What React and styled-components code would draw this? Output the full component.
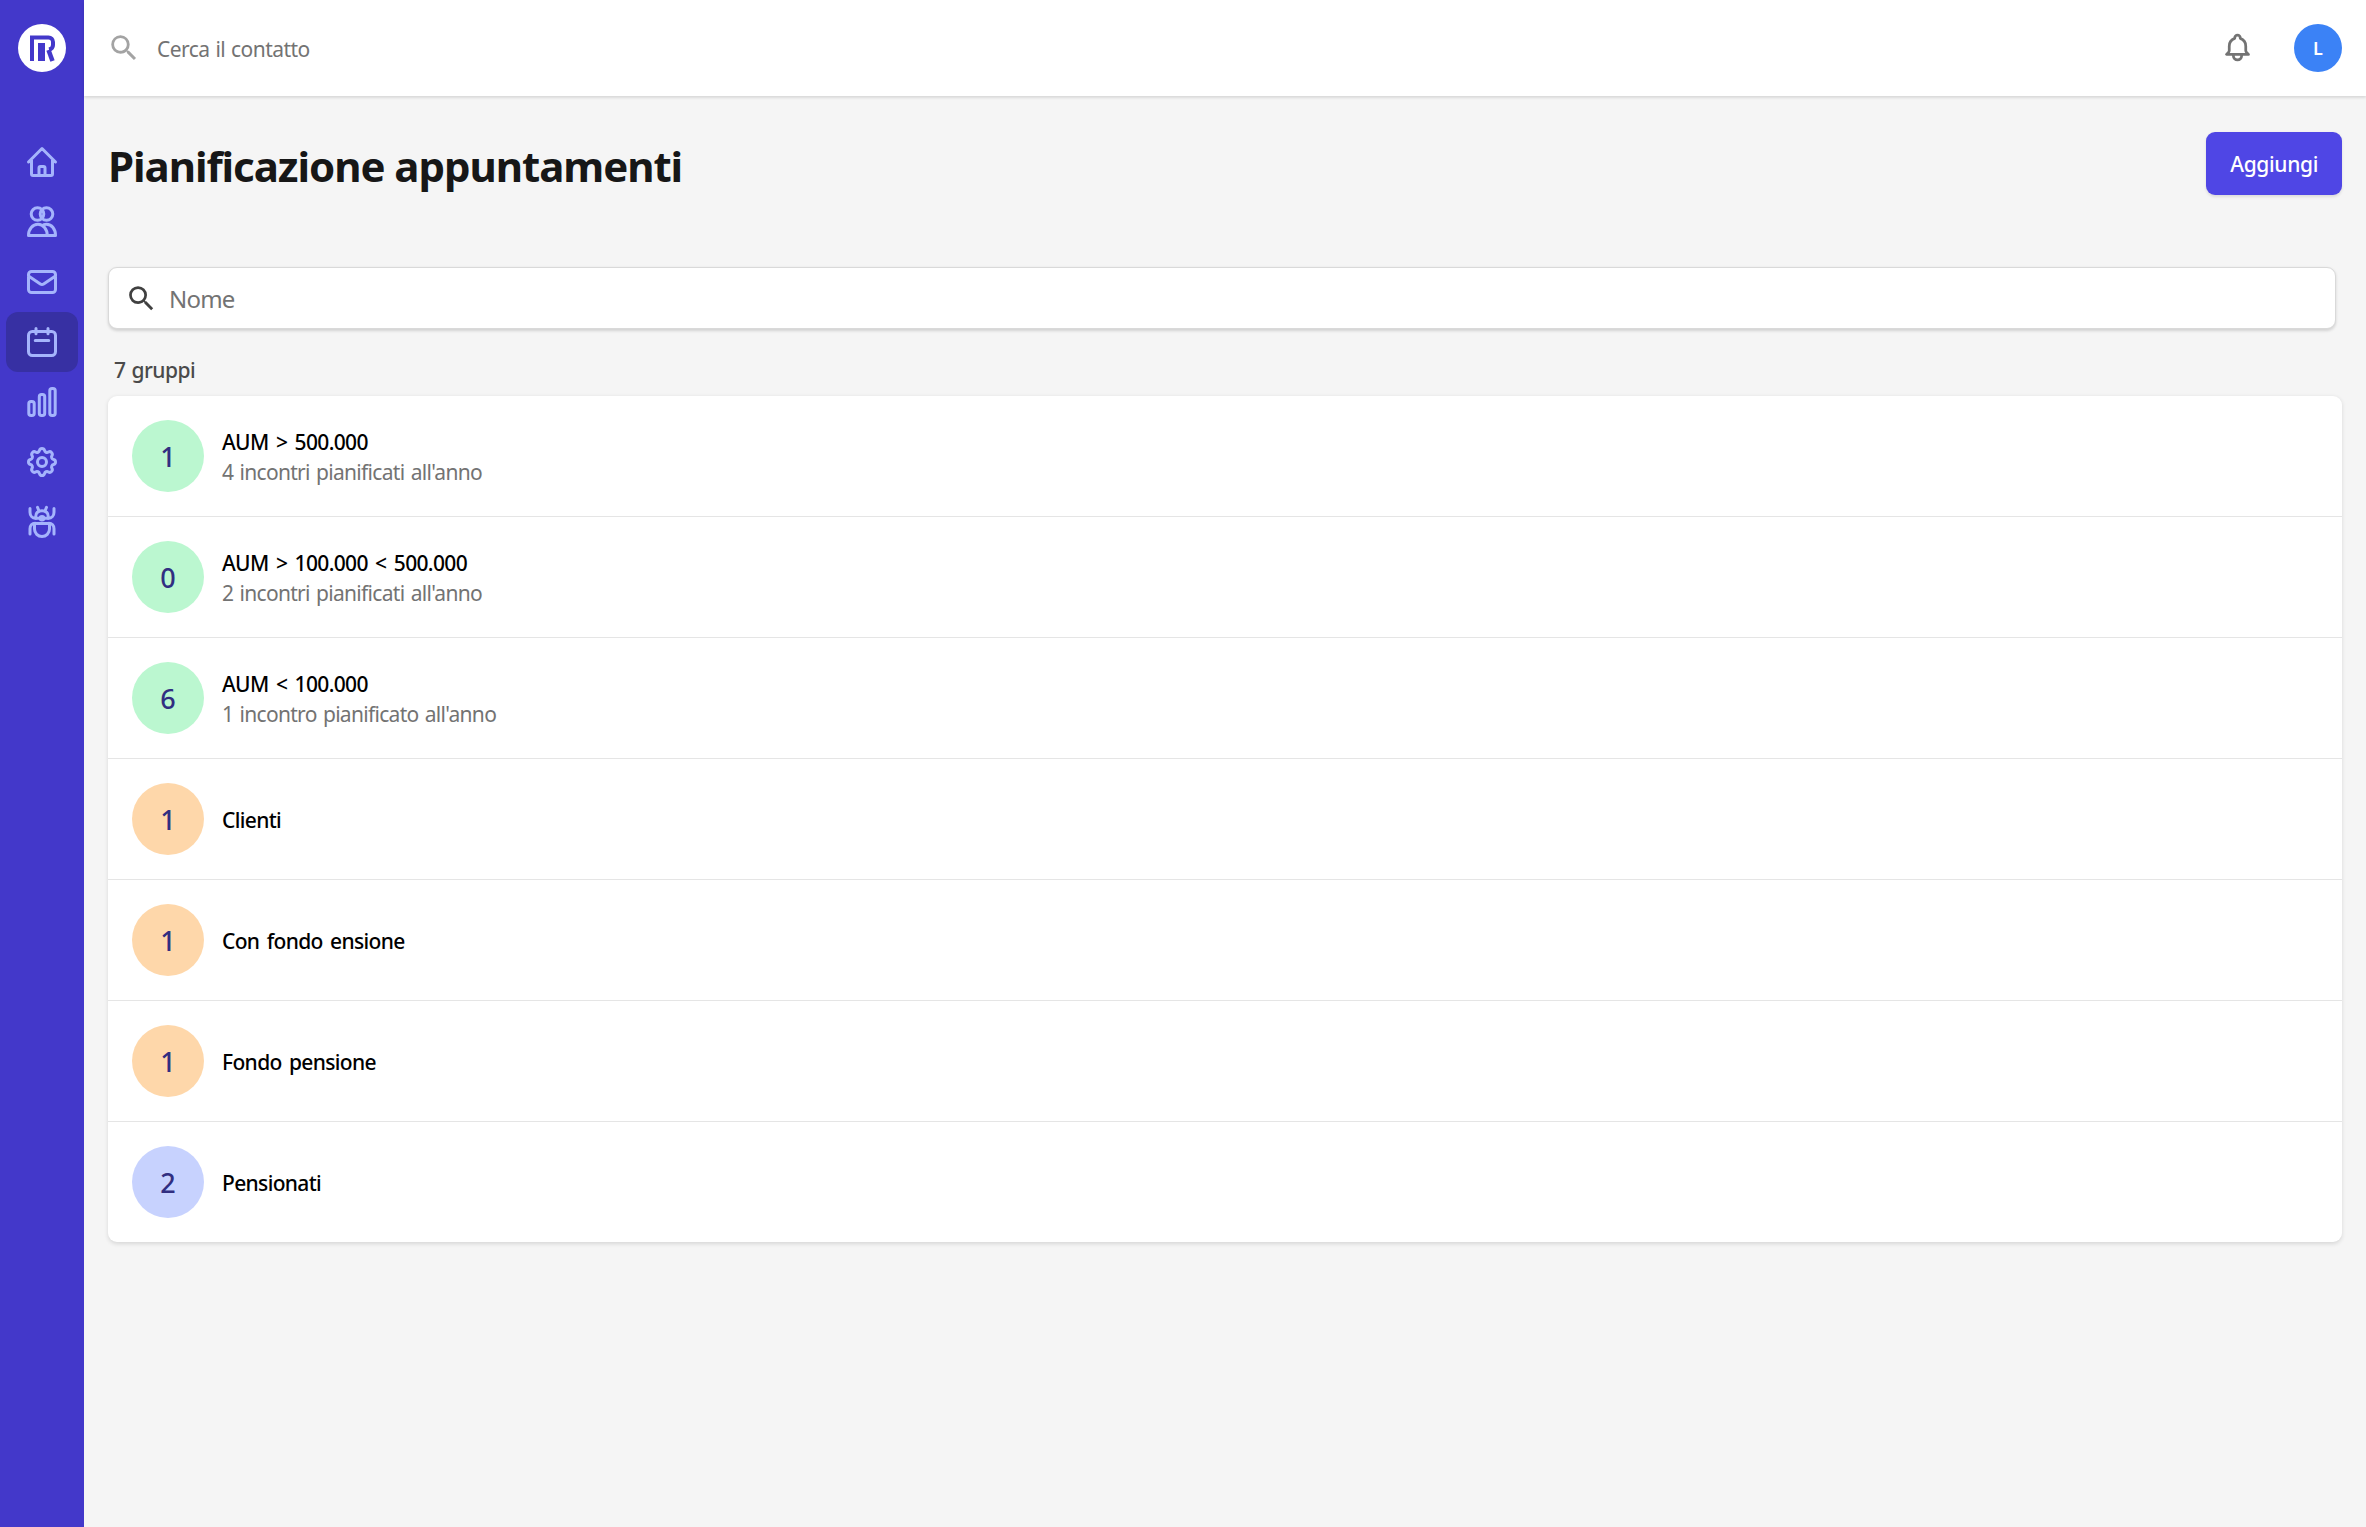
import React from "react";
import styled, { createGlobalStyle } from "styled-components";

const GlobalStyle = createGlobalStyle`
  html, body {
    margin: 0;
    padding: 0;
    background: #f5f5f5;
    font-family: "Noto Sans", "Open Sans", sans-serif;
  }
  * {
    box-sizing: border-box;
  }
`;

const Shell = styled.div`
  display: flex;
  min-height: 100vh;
`;

const Sidebar = styled.nav`
  width: 84px;
  flex-shrink: 0;
  background: #4338ca;
  display: flex;
  flex-direction: column;
  align-items: center;
  padding-top: 24px;
`;

const Logo = styled.div`
  width: 48px;
  height: 48px;
  border-radius: 50%;
  background: #fff;
  margin-bottom: 60px;
  display: flex;
  svg {
    width: 48px;
    height: 48px;
  }
`;

const NavItem = styled.a`
  width: 72px;
  height: 60px;
  border-radius: 12px;
  display: flex;
  align-items: center;
  justify-content: center;
  color: #a5b4fc;
  background: ${(props) => (props.$active ? "#3730a3" : "transparent")};
  svg {
    width: 36px;
    height: 36px;
  }
`;

const Main = styled.div`
  flex: 1;
  min-width: 0;
`;

const Topbar = styled.header`
  height: 96px;
  background: #fff;
  box-shadow: 0 1.5px 3px rgba(0, 0, 0, 0.14);
  display: flex;
  align-items: center;
  padding: 0 24px 0 23px;
`;

const TopSearchIcon = styled.svg`
  width: 34px;
  height: 34px;
  margin-right: 16px;
  color: #a3a3a3;
  flex-shrink: 0;
`;

const TopSearch = styled.input`
  flex: 1;
  border: 0;
  outline: 0;
  background: transparent;
  font: 400 21px "Noto Sans", sans-serif;
  letter-spacing: -0.55px;
  word-spacing: 1px;
  padding: 1px 0 0;
  &::placeholder {
    color: #737373;
    opacity: 1;
  }
`;

const BellButton = styled.span`
  display: flex;
  color: #737373;
  margin: 0 40px 2px 0;
  svg {
    width: 33px;
    height: 33px;
  }
`;

const Avatar = styled.div`
  width: 48px;
  height: 48px;
  border-radius: 50%;
  background: #3b82f6;
  color: #fff;
  font-size: 18px;
  font-weight: 600;
  display: flex;
  align-items: center;
  justify-content: center;
`;

const Content = styled.main`
  padding: 36px 24px 0;
`;

const PageHeader = styled.div`
  display: flex;
  justify-content: space-between;
  align-items: flex-start;
  margin-bottom: 72px;
`;

const Title = styled.h1`
  margin: 4px 0 0;
  font-size: 42px;
  line-height: 59px;
  font-weight: 700;
  letter-spacing: -1.05px;
  color: #171717;
`;

const AddButton = styled.button`
  height: 63px;
  padding: 0 24px;
  border: 0;
  border-radius: 9px;
  background: #4f46e5;
  color: #fff;
  font: 500 21px "Noto Sans", sans-serif;
  letter-spacing: -0.35px;
  box-shadow: 0 1.5px 3px rgba(0, 0, 0, 0.1);
`;

const FilterBox = styled.label`
  display: flex;
  align-items: center;
  height: 62px;
  margin-right: 6px;
  padding-left: 16px;
  background: #fff;
  border: 1.5px solid #d9d9d9;
  border-radius: 9px;
  box-shadow: 0 1.5px 3px rgba(0, 0, 0, 0.14);
`;

const FilterIcon = styled.svg`
  width: 33px;
  height: 33px;
  margin-right: 11px;
  color: #404040;
  flex-shrink: 0;
`;

const FilterInput = styled.input`
  flex: 1;
  border: 0;
  outline: 0;
  background: transparent;
  font: 400 24px "Noto Sans", sans-serif;
  letter-spacing: -0.8px;
  padding: 1px 0 0;
  &::placeholder {
    color: #737373;
    opacity: 1;
  }
`;

const GroupCount = styled.div`
  margin: 26px 0 11px;
  padding-left: 6px;
  font-size: 21px;
  line-height: 30px;
  letter-spacing: -0.5px;
  word-spacing: 1px;
  font-weight: 500;
  color: #4a4a4a;
`;

const GroupList = styled.ul`
  list-style: none;
  margin: 0;
  padding: 0;
  background: #fff;
  border-radius: 9px;
  box-shadow: 0 1.5px 4px rgba(0, 0, 0, 0.12);
`;

const GroupRow = styled.li`
  display: flex;
  align-items: center;
  gap: 18px;
  height: 121px;
  padding: 0 24px;
  border-bottom: 1.5px solid #e5e5e5;
  &:last-child {
    height: 120px;
    border-bottom: 0;
  }
`;

const CountBadge = styled.div`
  width: 72px;
  height: 72px;
  padding-top: 1px;
  border-radius: 50%;
  flex-shrink: 0;
  background: ${(props) => props.$color};
  color: #312e81;
  font-size: 27px;
  font-weight: 500;
  display: flex;
  align-items: center;
  justify-content: center;
`;

const GroupText = styled.div`
  padding-top: 2px;
`;

const GroupName = styled.div`
  font-size: 21px;
  line-height: 30px;
  font-weight: 500;
  letter-spacing: -0.65px;
  word-spacing: 2.5px;
  color: #000;
`;

const GroupDetail = styled.div`
  font-size: 21px;
  line-height: 30px;
  letter-spacing: -0.7px;
  word-spacing: 1.5px;
  color: #737373;
`;

const SEARCH_PATH =
  "M15.5 14h-.79l-.28-.27A6.471 6.471 0 0 0 16 9.5 6.5 6.5 0 1 0 9.5 16c1.61 0 3.09-.59 4.23-1.57l.27.28v.79l5 4.99L20.49 19l-4.99-5zm-6 0C7.01 14 5 11.99 5 9.5S7.01 5 9.5 5 14 7.01 14 9.5 11.99 14 9.5 14z";

const Outline = ({ children }) => (
  <svg
    viewBox="0 0 24 24"
    fill="none"
    stroke="currentColor"
    strokeWidth="2"
    strokeLinecap="round"
    strokeLinejoin="round"
  >
    {children}
  </svg>
);

const navIcons = [
  <path d="M3 12l2-2m0 0l7-7 7 7M5 10v10a1 1 0 001 1h3m10-11l2 2m-2-2v10a1 1 0 01-1 1h-3m-6 0a1 1 0 001-1v-4a1 1 0 011-1h2a1 1 0 011 1v4a1 1 0 001 1m-6 0h6" />,
  <>
    <circle cx="9" cy="6.7" r="4.2" />
    <circle cx="15" cy="6.7" r="4.2" />
    <path d="M3 21c0-4.300 2.800-7.500 6.300-7.500s6.200 3.200 6.200 7.500M13.200 13.800c.6-.2 1.200-.3 1.800-.3 3.500 0 6 3.200 6 7.500M3 21h18" />
  </>,
  <path d="M3 8l7.89 5.26a2 2 0 002.22 0L21 8M5 19h14a2 2 0 002-2V7a2 2 0 00-2-2H5a2 2 0 00-2 2v10a2 2 0 002 2z" />,
  <>
    <rect x="3" y="5" width="18" height="16" rx="2.5" />
    <path d="M8 3v3.5M16 3v3.5M7.500 11h9" />
  </>,
  <>
    <rect x="3.200" y="11.700" width="3.600" height="9.300" rx="1.500" />
    <rect x="10.200" y="7" width="3.600" height="14" rx="1.500" />
    <rect x="17.200" y="3" width="3.600" height="18" rx="1.500" />
  </>,
  <>
    <path d="M10.325 4.317c.426-1.756 2.924-1.756 3.35 0a1.724 1.724 0 002.573 1.066c1.543-.94 3.31.826 2.37 2.37a1.724 1.724 0 001.065 2.572c1.756.426 1.756 2.924 0 3.35a1.724 1.724 0 00-1.066 2.573c.94 1.543-.826 3.31-2.37 2.37a1.724 1.724 0 00-2.572 1.065c-.426 1.756-2.924 1.756-3.35 0a1.724 1.724 0 00-2.573-1.066c-1.543.94-3.31-.826-2.37-2.37a1.724 1.724 0 00-1.065-2.572c-1.756-.426-1.756-2.924 0-3.35a1.724 1.724 0 001.066-2.573c-.94-1.543.826-3.31 2.370-2.370.996.608 2.296.07 2.572-1.065z" />
    <path d="M15 12a3 3 0 11-6 0 3 3 0 016 0z" />
  </>,
  <>
    <path d="M7.800 9.500V8.500C7.800 5.800 9.500 4.500 12 4.500s4.200 1.300 4.200 4V9.500z" />
    <circle cx="12" cy="9.500" r="1.200" fill="currentColor" />
    <path d="M9 2.200l1 2.500M15 2.200l-1 2.500" />
    <path d="M4 3v2.500c0 2.300 1.500 4 3.800 4M20 3v2.500c0 2.300-1.500 4-3.800 4" />
    <path d="M4 20v-3.500c0-2.300 1.300-3.700 3.500-3.700M20 20v-3.500c0-2.300-1.300-3.700-3.500-3.700" />
    <path d="M7 13h10v3.700a5 5 0 01-10 0z" />
  </>,
];

const groups = [
  { count: 1, color: "#bbf7d0", name: "AUM > 500.000", detail: "4 incontri pianificati all'anno" },
  { count: 0, color: "#bbf7d0", name: "AUM > 100.000 < 500.000", detail: "2 incontri pianificati all'anno" },
  { count: 6, color: "#bbf7d0", name: "AUM < 100.000", detail: "1 incontro pianificato all'anno" },
  { count: 1, color: "#fed7aa", name: "Clienti" },
  { count: 1, color: "#fed7aa", name: "Con fondo ensione" },
  { count: 1, color: "#fed7aa", name: "Fondo pensione" },
  { count: 2, color: "#c7d2fe", name: "Pensionati" },
];

const App = () => {
  return (
    <Shell>
      <GlobalStyle />
      <Sidebar>
        <Logo>
          <svg viewBox="0 0 48 48" fill="none" stroke="#4338ca" strokeWidth="4">
            <path d="M14 37V13.500h16.500c2.500 0 4.500 1.500 4.500 4.500v3c0 2.500-1.500 4-4 4.500" />
            <path d="M23.500 37V19" strokeWidth="7" />
            <path d="M30.500 26l4 11" strokeWidth="4.500" />
          </svg>
        </Logo>
        {navIcons.map((icon, i) => (
          <NavItem key={i} $active={i === 3}>
            <Outline>{icon}</Outline>
          </NavItem>
        ))}
      </Sidebar>
      <Main>
        <Topbar>
          <TopSearchIcon viewBox="0 0 24 24" fill="currentColor">
            <path d={SEARCH_PATH} />
          </TopSearchIcon>
          <TopSearch placeholder="Cerca il contatto" />
          <BellButton>
            <Outline>
              <path d="M15 17h5l-1.405-1.405A2.032 2.032 0 0118 14.158V11a6.002 6.002 0 00-4-5.659V5a2 2 0 10-4 0v.341C7.67 6.165 6 8.388 6 11v3.159c0 .538-.214 1.055-.595 1.436L4 17h5m6 0v1a3 3 0 11-6 0v-1m6 0H9" />
            </Outline>
          </BellButton>
          <Avatar>L</Avatar>
        </Topbar>
        <Content>
          <PageHeader>
            <Title>Pianificazione appuntamenti</Title>
            <AddButton>Aggiungi</AddButton>
          </PageHeader>
          <FilterBox>
            <FilterIcon viewBox="0 0 24 24" fill="currentColor">
              <path d={SEARCH_PATH} />
            </FilterIcon>
            <FilterInput placeholder="Nome" />
          </FilterBox>
          <GroupCount>7 gruppi</GroupCount>
          <GroupList>
            {groups.map((group) => (
              <GroupRow key={group.name}>
                <CountBadge $color={group.color}>{group.count}</CountBadge>
                <GroupText>
                  <GroupName>{group.name}</GroupName>
                  {group.detail && <GroupDetail>{group.detail}</GroupDetail>}
                </GroupText>
              </GroupRow>
            ))}
          </GroupList>
        </Content>
      </Main>
    </Shell>
  );
};

export default App;
